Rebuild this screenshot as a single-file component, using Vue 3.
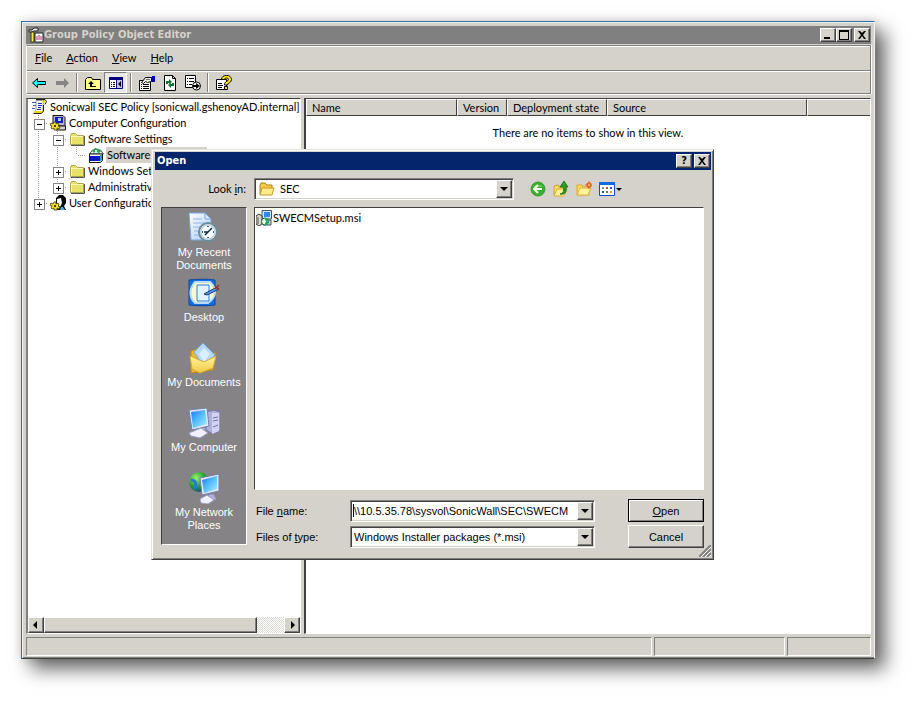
<script setup>
import { ref } from 'vue'

const menus = [['F', 'ile'], ['A', 'ction'], ['V', 'iew'], ['H', 'elp']]

const tools = [
  { icon: 'back', label: 'Back' },
  { icon: 'forward', label: 'Forward' },
  { sep: true },
  { icon: 'up-level', label: 'Up one level' },
  { icon: 'tree-toggle', label: 'Show or hide console tree', pressed: true },
  { sep: true },
  { icon: 'properties', label: 'Properties' },
  { icon: 'refresh', label: 'Refresh' },
  { icon: 'export', label: 'Export list' },
  { sep: true },
  { icon: 'help', label: 'Help' },
]

const tree = [
  { icon: 'scroll', text: 'Sonicwall SEC Policy [sonicwall.gshenoyAD.internal]', guides: [] },
  { icon: 'computer-gear', text: 'Computer Configuration', guides: ['minus tee'] },
  { icon: 'folder', text: 'Software Settings', guides: ['line', 'minus tee'] },
  { icon: 'package', text: 'Software installation', guides: ['line', 'line', 'elbow'], selected: true },
  { icon: 'folder', text: 'Windows Settings', guides: ['line', 'plus tee'] },
  { icon: 'folder', text: 'Administrative Templates', guides: ['line', 'plus elbow'] },
  { icon: 'user-gear', text: 'User Configuration', guides: ['plus elbow'] },
]

const places = [
  { icon: 'recent', text: 'My Recent Documents' },
  { icon: 'desktop', text: 'Desktop' },
  { icon: 'documents', text: 'My Documents' },
  { icon: 'computer', text: 'My Computer' },
  { icon: 'network', text: 'My Network Places' },
]

const fileName = ref('\\\\10.5.35.78\\sysvol\\SonicWall\\SEC\\SWECM')
</script>

<template>
  <svg class="defs" aria-hidden="true">
    <symbol id="i-app" viewBox="0 0 16 16">
      <path d="M1 3h3l2-2h4v3H6L4 5H1z" fill="#e8e8e8" stroke="#222" />
      <path d="M3 5h3v10H3z" fill="#f5e84a" stroke="#333" />
      <path d="M7 6h8v9H7z" fill="#fff" stroke="#222" />
      <path d="M9 9v4M11 8v5M13 9v4" stroke="#b03060" />
    </symbol>
    <symbol id="i-back" viewBox="0 0 16 16">
      <path d="M1.500 8l5-4.500v3h8v3h-8v3z" fill="#0ff" stroke="#000" />
    </symbol>
    <symbol id="i-forward" viewBox="0 0 16 16">
      <path d="M15 8l-5-5v3H2v4h8v3z" fill="#858585" />
    </symbol>
    <symbol id="i-up-level" viewBox="0 0 16 16">
      <path d="M.5 14.500V4.500l2-2h4l1 2h8v10z" fill="#ffff8c" stroke="#000" />
      <path d="M6 6l-3 3h2v3h6v-1H7V9h2z" fill="#000" />
    </symbol>
    <symbol id="i-tree-toggle" viewBox="0 0 16 16">
      <path d="M1.500 2.500h13v11h-13z" fill="#fff" stroke="#000080" />
      <path d="M1 2h14v3H1z" fill="#000080" />
      <path d="M9 5h5v8H9z" fill="#c8c8d0" />
      <path d="M8.500 5v9" stroke="#000080" />
      <path d="M3 7h1v1H3zM5 7h2v1H5zM3 9h1v1H3zM5 9h2v1H5zM3 11h1v1H3zM5 11h2v1H5zM13 6v6l-3-3z" fill="#000" />
    </symbol>
    <symbol id="i-properties" viewBox="0 0 16 16">
      <path d="M.5 5.500h11v10H.5z" fill="#fff" stroke="#000" />
      <path d="M2 9h1v1H2zM4 9h6v1H4zM2 11h1v1H2zM4 11h6v1H4zM2 13h1v1H2zM4 13h6v1H4z" fill="#000" />
      <path d="M2.500 7.500l4-5h6v4l-4 1-2-1-2 2z" fill="#f2f2e8" stroke="#000" />
      <path d="M13 1h3v6h-3z" fill="#0000b0" />
      <path d="M7 4.500h4" stroke="#777" />
    </symbol>
    <symbol id="i-refresh" viewBox="0 0 16 16">
      <path d="M2.500.5h8l3 3v12h-11z" fill="#fff" stroke="#000" />
      <path d="M10.500 .5v3h3" fill="none" stroke="#000" />
      <path d="M4 9V6h3V4l3 3-3 2V8H6v1zM12 8v3H9v2l-3-3 3-2v1h1V8z" fill="#087830" />
    </symbol>
    <symbol id="i-export" viewBox="0 0 16 16">
      <path d="M.5.5h10v12H.5z" fill="#fff" stroke="#000" />
      <path d="M2 3h1v1H2zM4 3h5v1H4zM2 6h1v1H2zM4 6h5v1H4zM2 9h1v1H2zM4 9h3v1H4z" fill="#000" />
      <circle cx="11.500" cy="11" r="4" fill="#fff" stroke="#000" />
      <path d="M8 10h3V8l4 3-4 3v-2H8z" fill="#000" />
    </symbol>
    <symbol id="i-help" viewBox="0 0 16 16">
      <path d="M.5 4.500h10v10H.5z" fill="#fff" stroke="#000" />
      <path d="M2 8h4v1H2zM2 10h5v1H2zM2 12h4v1H2z" fill="#000" />
      <path d="M5.500 4.500c0-5.500 10-5.500 10 0 0 3.500-4 3-4 5.500h-3c0-4 4-3.500 4-5.500 0-2-4-2-4 0z" fill="#ffea18" stroke="#000" />
      <path d="M8.500 11.500h3v3h-3z" fill="#ffea18" stroke="#000" />
    </symbol>
    <symbol id="i-scroll" viewBox="0 0 16 16">
      <path d="M5 1.500h9l-2 4v6l-2 2H3l2-3V4z" fill="#fff" stroke="#999" />
      <path d="M7 4.500h4M7 6.500h4M7 8.500h3M6 10.500h4" stroke="#1832d0" />
      <path d="M11 2.500h3M3 13h8l1-2" fill="none" stroke="#f0d820" stroke-width="2" />
      <path d="M5 .5h9l1.500 2-1.500 3M12.500 6v6l-2 2.500h-8" fill="none" stroke="#222" />
      <path d="M1 3.500h4M2 6.500h3M1 9.500h3" stroke="#4060c0" />
    </symbol>
    <symbol id="i-computer-gear" viewBox="0 0 16 16">
      <path d="M3 .5h10l2 2V11H3z" fill="#b8b8c8" stroke="#111" />
      <path d="M5 2h8v6H5z" fill="#1020b8" />
      <path d="M8 3h3v3H8z" fill="#a8d0ff" />
      <path d="M6 11h9.500v4H6z" fill="#d0d0d0" stroke="#111" />
      <path d="M4 7h2v2l2-1 1 2-1 1 2 1-1 2-2-1v2H4v-2l-2 1-1-1 1-2-2-1 1-2 2 1z" fill="#f4e030" stroke="#443c00" stroke-width=".8" />
      <path d="M4 10h2v2H4z" fill="#443c00" />
    </symbol>
    <symbol id="i-user-gear" viewBox="0 0 16 16">
      <path d="M6 3l3-3h4l3 3v5l-2 3 2 4H7l1-4-2-3z" fill="#080808" />
      <path d="M7 4l4-1 1 5-2 4-3-3z" fill="#fff" />
      <path d="M11 12h2l2 3h-5z" fill="#40a8f0" />
      <path d="M4 7h2v2l2-1 1 2-1 1 2 1-1 2-2-1v2H4v-2l-2 1-1-1 1-2-2-1 1-2 2 1z" fill="#f4e030" stroke="#443c00" stroke-width=".8" />
      <path d="M4 10h2v2H4z" fill="#443c00" />
    </symbol>
    <symbol id="i-folder" viewBox="0 0 16 16">
      <path d="M1.500 13.500v-9l1-2h4l2 2h6v9z" fill="#e8e268" stroke="#a8a458" />
      <path d="M2 5.500h12M2.500 5v8" stroke="#fbf8b4" />
      <path d="M2 14.500h13.500V5" fill="none" stroke="#555" />
    </symbol>
    <symbol id="i-package" viewBox="0 0 16 16">
      <path d="M1.500 7l3-4h8l3 4z" fill="#e8f4e8" stroke="#555" />
      <path d="M1.500 7v8.500h11l2-2V7z" fill="#fff" stroke="#111" />
      <path d="M2 9h10v5H2z" fill="#0818c8" />
      <path d="M12 8h2v5l-2 2z" fill="#30a0d0" />
      <path d="M4 4l3-3 4 1 2 3-3 1-2-2-2 2z" fill="#30a058" />
      <path d="M7 3h2v2H7z" fill="#d8f0e0" />
    </symbol>
    <symbol id="i-folder-open" viewBox="0 0 16 16">
      <path d="M1 13V4l1-2h4l2 2h5v3" fill="#f3c94a" stroke="#b08010" />
      <path d="M1 14l2-7h12l-2 7z" fill="#ffec88" stroke="#c89a28" />
    </symbol>
    <symbol id="i-msi" viewBox="0 0 16 16">
      <path d="M6 .5h9.500V9H6z" fill="#d8e4f8" stroke="#456" />
      <path d="M8 2h6v5H8z" fill="#3088f0" />
      <path d="M0 6l3-2 3 2v8l-3 2-3-2z" fill="#d8d8c8" stroke="#333" />
      <path d="M2 7v7" stroke="#555" />
      <path d="M7 10h8v5H7z" fill="#c8ccd8" stroke="#456" />
      <circle cx="9" cy="11.500" r="3.500" fill="#e8fff0" stroke="#186048" />
      <path d="M9 8a3.500 3.500 0 0 1 0 7z" fill="#28b060" />
      <circle cx="9" cy="11.500" r="1" fill="#fff" />
    </symbol>
    <symbol id="i-nav-back" viewBox="0 0 16 16">
      <circle cx="8" cy="8" r="7" fill="#35b226" stroke="#3c9c34" />
      <path d="M3 6a6 5 0 0 1 10 0z" fill="#7ddc62" opacity=".7" />
      <path d="M12 8H5M8 4L4 8l4 4" fill="none" stroke="#fff" stroke-width="2" />
    </symbol>
    <symbol id="i-nav-up" viewBox="0 0 16 16">
      <path d="M1 14V5l4-1 1 2h7l-2 8z" fill="#ffe060" stroke="#d0a028" />
      <path d="M1 15l3-7h10l-3 7z" fill="#fff09a" stroke="#d8ac38" />
      <path d="M7 13c4-1 4-4 3-7H7l4-6 4 6h-2c1 5-1 8-6 7z" fill="#28a020" stroke="#106010" stroke-width=".7" />
    </symbol>
    <symbol id="i-nav-new" viewBox="0 0 16 16">
      <path d="M1 14V4h5l1 2h6v8z" fill="#ffdc58" stroke="#d8a830" />
      <path d="M1 14l3-7h11l-3 7z" fill="#fff09a" stroke="#dcb448" />
      <circle cx="13" cy="4" r="2" fill="#ffb050" stroke="#f06020" stroke-width="1.500" />
      <path d="M13 0v2M13 6v2M9 4h2M15 4h1" stroke="#f06020" />
    </symbol>
    <symbol id="i-nav-view" viewBox="0 0 16 16">
      <path d="M.5 2v12.500h15V2z" fill="#fff" stroke="#0a50c0" />
      <path d="M0 1h16v3H0z" fill="#1468e0" />
      <path d="M3 6h2v2H3z" fill="#888" /><path d="M7 6h2v2H7z" fill="#e04020" /><path d="M11 6h2v2h-2z" fill="#2050d0" />
      <path d="M3 10h2v2H3z" fill="#2050d0" /><path d="M7 10h2v2H7z" fill="#30a030" /><path d="M11 10h2v2h-2z" fill="#e0a020" />
    </symbol>

    <linearGradient id="g-screen" x1="0" y1="0" x2="1" y2="1">
      <stop offset="0" stop-color="#1d7af0" /><stop offset=".5" stop-color="#58c0ff" /><stop offset="1" stop-color="#b0ecff" />
    </linearGradient>
    <linearGradient id="g-paper" x1="0" y1="0" x2="1" y2="1">
      <stop offset="0" stop-color="#fff" /><stop offset="1" stop-color="#a8c8f4" />
    </linearGradient>
    <linearGradient id="g-folder" x1="0" y1="0" x2="0" y2="1">
      <stop offset="0" stop-color="#fff4a0" /><stop offset="1" stop-color="#f4c840" />
    </linearGradient>
    <radialGradient id="g-globe" cx=".35" cy=".3" r=".8">
      <stop offset="0" stop-color="#a0f070" /><stop offset=".5" stop-color="#28a830" /><stop offset="1" stop-color="#0a3c90" />
    </radialGradient>
    <symbol id="i-recent" viewBox="0 0 32 32">
      <path d="M1 1h16l6 6v21H3z" fill="url(#g-paper)" stroke="#7aa4e0" />
      <path d="M17 1v6h6z" fill="#dcecff" stroke="#7aa4e0" />
      <path d="M5 7h9M5 11h12M5 15h8M6 19h6M6 23h6" stroke="#90b4ec" />
      <circle cx="20" cy="20" r="9" fill="#d8e8f0" stroke="#6c8c9c" stroke-width="2" />
      <circle cx="20" cy="20" r="7" fill="#f8feff" stroke="#a8c8d8" />
      <path d="M20 14v1M20 25v1M14 20h1M25 20h1M17 23l3-3 4-4M20 20h-4" stroke="#063048" stroke-width="1.500" fill="none" />
    </symbol>
    <symbol id="i-desktop" viewBox="0 0 32 32">
      <path d="M1 3c8-1 18-1 26 0v25c-8 1-18 1-26 0z" fill="#1470e0" stroke="#0848a8" />
      <path d="M7 5h15c7 6 7 15-2 21H7C1 20 1 12 7 5z" fill="#fff8c8" stroke="#b8dcff" stroke-width="2" />
      <path d="M9 8h12v16H9z" fill="#e4f2ff" stroke="#2880e0" />
      <path d="M16 17l13-7 2 2-12 6z" fill="#58a0e8" stroke="#103870" />
      <path d="M27 9l4 4M31 8l-4 4" stroke="#a03818" stroke-width="1.500" />
    </symbol>
    <symbol id="i-documents" viewBox="0 0 32 32">
      <path d="M3 9l8-3 3 4 14 1-3 17-22 3z" fill="#e8b838" stroke="#b88818" />
      <path d="M6 10L15 1l12 12-11 12z" fill="#b4d8fc" stroke="#78a8d8" />
      <path d="M11 12l5-6 6 6-6 8z" fill="#d8f0ff" />
      <path d="M2 14l14 6 12-6-3 12-13 5-8-4z" fill="url(#g-folder)" stroke="#d8ac30" />
    </symbol>
    <symbol id="i-computer" viewBox="0 0 32 32">
      <path d="M18 5l8-2 6 2v19l-7 3-7-4z" fill="#b0b0d8" stroke="#7878a8" />
      <path d="M24 6l7 0v18l-7 3z" fill="#d4d4f0" />
      <path d="M25 11l5-1M25 14l5-1M25 20l5-2" stroke="#7070a8" />
      <path d="M1 3l18-2 2 18-17 4z" fill="#e4e8f8" stroke="#7080b0" />
      <path d="M3 5l14-2 2 14-14 4z" fill="url(#g-screen)" />
      <path d="M11 21h6l1 6h-8z" fill="#a8acd0" />
      <path d="M1 26l12-5 7 5-8 5-9-2z" fill="#f0f0ff" stroke="#9a9cc0" />
    </symbol>
    <symbol id="i-network" viewBox="0 0 32 32">
      <circle cx="11" cy="10" r="10" fill="url(#g-globe)" />
      <path d="M3 8c5 0 6 5 3 9" stroke="#2878d8" stroke-width="3" fill="none" />
      <path d="M12 6l19-4v17l-17 4z" fill="#e4e8f8" stroke="#7080b0" />
      <path d="M14 8l15-4v13l-13 4z" fill="url(#g-screen)" />
      <path d="M21 22h5l3 6h-9z" fill="#b0b0d8" stroke="#8080a8" />
      <path d="M12 27l7-4 7 5-6 4-7-1z" fill="#f0f0ff" stroke="#a0a0c4" />
    </symbol>
  </svg>

  <div class="desktop">
    <main class="window">
      <header class="title-bar">
        <svg class="icon16"><use href="#i-app" /></svg>
        <h1>Group Policy Object Editor</h1>
        <div class="caption-buttons">
          <button type="button" aria-label="Minimize"><svg viewBox="0 0 12 10"><path d="M2 7h6v2H2z" /></svg></button>
          <button type="button" aria-label="Maximize"><svg viewBox="0 0 12 10"><path d="M1 0h10v10H1zM2 2v7h8V2z" fill-rule="evenodd" /></svg></button>
          <button type="button" aria-label="Close" class="close"><svg viewBox="0 0 12 10"><path d="M2 1h2l2 2 2-2h2L7 5l3 4H8L6 6 4 9H2l3-4z" /></svg></button>
        </div>
      </header>

      <div class="bars">
        <nav class="menu">
          <button v-for="m in menus" :key="m[0]" type="button"><u>{{ m[0] }}</u>{{ m[1] }}</button>
        </nav>
        <div class="toolbar">
          <template v-for="(t, i) in tools" :key="i">
            <span v-if="t.sep" class="sep"></span>
            <button v-else type="button" :aria-label="t.label" :class="{ pressed: t.pressed }">
              <svg class="icon16"><use :href="'#i-' + t.icon" /></svg>
            </button>
          </template>
        </div>
      </div>

      <div class="panes">
        <section class="tree-pane">
          <ul class="tree">
            <li v-for="node in tree" :key="node.text">
              <span v-for="(g, i) in node.guides" :key="i" class="guide" :class="g"></span>
              <svg class="icon16 node-icon"><use :href="'#i-' + node.icon" /></svg>
              <span class="node-text" :class="{ selected: node.selected }">{{ node.text }}</span>
            </li>
          </ul>
          <div class="scrollbar">
            <button type="button" aria-label="Scroll left"><svg viewBox="0 0 8 8"><path d="M5 0v8L1 4z" /></svg></button>
            <span class="thumb"></span>
            <span class="track"></span>
            <button type="button" aria-label="Scroll right"><svg viewBox="0 0 8 8"><path d="M3 0v8l4-4z" /></svg></button>
          </div>
        </section>

        <section class="list-pane">
          <table>
            <colgroup><col class="c-name"><col class="c-version"><col class="c-state"><col class="c-source"><col></colgroup>
            <thead>
              <tr><th>Name</th><th>Version</th><th>Deployment state</th><th>Source</th><th></th></tr>
            </thead>
            <tbody>
              <tr><td colspan="5">There are no items to show in this view.</td></tr>
            </tbody>
          </table>
        </section>
      </div>

      <footer class="status"><span></span><span></span><span></span></footer>
    </main>

    <section class="dialog" role="dialog" aria-labelledby="dialog-title">
      <header class="title-bar active">
        <h2 id="dialog-title">Open</h2>
        <div class="caption-buttons">
          <button type="button" aria-label="Help" class="what">?</button>
          <button type="button" aria-label="Close" class="close"><svg viewBox="0 0 12 10"><path d="M2 1h2l2 2 2-2h2L7 5l3 4H8L6 6 4 9H2l3-4z" /></svg></button>
        </div>
      </header>

      <div class="look-row">
        <label for="look-in">Look <u>i</u>n:</label>
        <div class="combo with-icon">
          <svg class="icon16 combo-icon"><use href="#i-folder-open" /></svg>
          <select id="look-in"><option>SEC</option></select>
          <span class="drop"><svg viewBox="0 0 8 4"><path d="M0 0h8L4 4z" /></svg></span>
        </div>
        <div class="nav-tools">
          <button type="button" aria-label="Go back"><svg class="icon16"><use href="#i-nav-back" /></svg></button>
          <button type="button" aria-label="Up one level"><svg class="icon16"><use href="#i-nav-up" /></svg></button>
          <button type="button" aria-label="Create new folder"><svg class="icon16"><use href="#i-nav-new" /></svg></button>
          <button type="button" aria-label="View menu">
            <svg class="icon16"><use href="#i-nav-view" /></svg>
            <svg class="tiny" viewBox="0 0 6 3"><path d="M0 0h6L3 3z" /></svg>
          </button>
        </div>
      </div>

      <div class="dialog-body">
        <nav class="places">
          <button v-for="p in places" :key="p.text" type="button">
            <svg class="icon32"><use :href="'#i-' + p.icon" /></svg>
            <span>{{ p.text }}</span>
          </button>
        </nav>
        <div class="right">
          <ul class="files">
            <li><svg class="icon16"><use href="#i-msi" /></svg><span>SWECMSetup.msi</span></li>
          </ul>
          <form class="fields" @submit.prevent>
            <label for="file-name">File <u>n</u>ame:</label>
            <div class="combo">
              <input id="file-name" v-model="fileName" type="text">
              <button type="button" class="drop" aria-label="Show recent names"><svg viewBox="0 0 8 4"><path d="M0 0h8L4 4z" /></svg></button>
            </div>
            <button type="submit" class="push default"><u>O</u>pen</button>
            <label for="file-type">Files of <u>t</u>ype:</label>
            <div class="combo">
              <select id="file-type"><option>Windows Installer packages (*.msi)</option></select>
              <span class="drop"><svg viewBox="0 0 8 4"><path d="M0 0h8L4 4z" /></svg></span>
            </div>
            <button type="button" class="push">Cancel</button>
          </form>
        </div>
      </div>
      <svg class="grip" viewBox="0 0 12 12"><path d="M0 12L12 0M4 12l8-8M8 12l4-4" stroke="#808080" stroke-width="2" /><path d="M2 12L12 2M6 12l6-6M10 12l2-2" stroke="#fff" /></svg>
    </section>
  </div>
</template>

<style>
body {
  margin: 0;
  background: #fff;
}
</style>

<style scoped>
* {
  box-sizing: border-box;
}
.defs {
  position: absolute;
  width: 0;
  height: 0;
}
.desktop {
  --face: #d5d2cb;
  --shade: #808080;
  --dark: #404040;
  position: relative;
  display: flex;
  min-height: 100vh;
  padding: 21px 42px 42px 21px;
  font: 11px/16px Lato, sans-serif;
  color: #000;
}
button,
input,
select {
  font: inherit;
  color: inherit;
  margin: 0;
  padding: 0;
  border: 0;
  border-radius: 0;
  background: none;
}
u {
  text-underline-offset: 1px;
}
ul {
  margin: 0;
  padding: 0;
  list-style: none;
}
.icon16 {
  flex: none;
  width: 16px;
  height: 16px;
}
.icon32 {
  width: 32px;
  height: 32px;
}

/* window frame */
.window {
  flex: 1;
  min-width: 0;
  display: flex;
  flex-direction: column;
  padding: 4px 3px 2px 4px;
  border: 1px solid;
  border-color: #39709f #f4f4f4 var(--dark) #39709f;
  background: var(--face);
  box-shadow: inset 1px 1px #e9f3fa, inset 0 -1px var(--shade), 10px 10px 18px rgba(0, 0, 0, .6), 0 0 10px rgba(0, 0, 0, .14);
}
.title-bar {
  display: flex;
  align-items: center;
  height: 18px;
  padding: 0 1px 0 2px;
  background: var(--shade);
  color: #d5d2cb;
}
.title-bar h1,
.title-bar h2 {
  flex: 1;
  margin: 0;
  font: bold 11px/16px "DejaVu Sans Condensed", "DejaVu Sans", sans-serif;
}
.caption-buttons {
  display: flex;
}
.caption-buttons button {
  display: flex;
  align-items: center;
  justify-content: center;
  width: 16px;
  height: 14px;
  background: var(--face);
  border: 1px solid;
  border-color: #fff var(--dark) var(--dark) #fff;
  box-shadow: inset -1px -1px var(--shade);
  color: #000;
}
.caption-buttons .close {
  margin-left: 2px;
}
.caption-buttons svg {
  width: 12px;
  height: 10px;
}
.caption-buttons .what {
  font: bold 11px/12px "DejaVu Sans Condensed", "DejaVu Sans", sans-serif;
}
.bars {
  margin-top: 1px;
  border: 1px solid var(--shade);
  border-left-color: #fff;
  box-shadow: inset 0 1px #fff, 0 1px #fff, 1px 0 #fff;
}
.menu {
  display: flex;
  gap: 14px;
  height: 25px;
  padding: 0 8px 1px;
  border-bottom: 1px solid var(--shade);
}
.toolbar {
  display: flex;
  align-items: center;
  height: 22px;
  border-top: 1px solid #fff;
}
.toolbar button {
  display: flex;
  align-items: center;
  justify-content: center;
  width: 23px;
  height: 21px;
}
.toolbar .pressed {
  border: 1px solid;
  border-color: var(--shade) #fff #fff var(--shade);
  background: #ebe9e5;
}
.sep {
  width: 2px;
  height: 19px;
  margin: 0 3px;
  border-left: 1px solid var(--shade);
  border-right: 1px solid #fff;
}

/* panes */
.panes {
  flex: 1;
  display: flex;
  gap: 3px;
  min-height: 0;
  margin-top: 4px;
}
.tree-pane,
.list-pane {
  border: 1px solid;
  border-color: var(--dark) #fff #fff var(--dark);
  background: #fff;
}
.tree-pane {
  flex: none;
  display: flex;
  flex-direction: column;
  width: 275px;
  border-left: 2px solid var(--shade);
}
.tree {
  flex: 1;
  padding-left: 1px;
}
.tree li {
  display: flex;
  height: 16px;
  line-height: 15px;
  white-space: nowrap;
}
.guide {
  position: relative;
  flex: none;
  width: 19px;
  background: repeating-linear-gradient(#999 0 1px, transparent 1px 2px) 9px 0 / 1px 100% no-repeat;
}
.guide.elbow {
  background-size: 1px 8px;
}
.guide.tee::after,
.guide.elbow::after {
  content: "";
  position: absolute;
  top: 8px;
  left: 10px;
  right: 0;
  height: 1px;
  background: repeating-linear-gradient(90deg, transparent 0 1px, #999 1px 2px);
}
.guide.plus::before,
.guide.minus::before {
  content: "";
  position: absolute;
  z-index: 1;
  top: 4px;
  left: 5px;
  width: 9px;
  height: 9px;
  border: 1px solid #848484;
  background: linear-gradient(#000, #000) center / 5px 1px no-repeat, #fff;
}
.guide.plus::before {
  background: linear-gradient(#000, #000) center / 5px 1px no-repeat, linear-gradient(#000, #000) center / 1px 5px no-repeat, #fff;
}
.node-icon {
  margin: 0 2px;
}
.node-text {
  padding: 0 1px;
}
.node-text.selected {
  background: var(--face);
}
.scrollbar {
  display: flex;
  height: 16px;
  background: #eeece8;
}
.scrollbar button,
.thumb {
  border: 1px solid;
  border-color: #fff var(--dark) var(--dark) #fff;
  box-shadow: inset -1px -1px var(--shade);
  background: var(--face);
}
.scrollbar button {
  display: flex;
  align-items: center;
  justify-content: center;
  width: 16px;
}
.scrollbar svg {
  width: 8px;
  height: 8px;
}
.thumb {
  flex: 1;
}
.track {
  width: 27px;
  background: repeating-conic-gradient(#fff 0 25%, #dcdad5 0 50%) 0 0 / 2px 2px;
}
.list-pane {
  flex: 1;
  min-width: 0;
  border-left: 2px solid var(--dark);
}
table {
  width: 100%;
  table-layout: fixed;
  border-collapse: separate;
  border-spacing: 0;
}
.c-name { width: 151px; }
.c-version { width: 50px; }
.c-state { width: 100px; }
.c-source { width: 200px; }
th {
  height: 17px;
  padding: 0 5px;
  border: 1px solid;
  border-color: #fff var(--dark) var(--dark) #fff;
  background: var(--face);
  font-weight: 400;
  line-height: 14px;
  text-align: left;
  white-space: nowrap;
}
th:last-child {
  border-right: 0;
}
td {
  padding: 9px 0;
  text-align: center;
}
.status {
  display: grid;
  grid-template-columns: 1fr 131px 84px;
  gap: 2px;
  margin-top: 3px;
}
.status span {
  height: 19px;
  border: 1px solid;
  border-color: var(--shade) #fff #fff var(--shade);
}

/* open dialog */
.dialog {
  position: absolute;
  left: 151px;
  top: 149px;
  width: 563px;
  padding: 2px 2px 11px 3px;
  border: 1px solid;
  border-color: #e4e2dd var(--dark) var(--dark) #e4e2dd;
  background: var(--face);
  box-shadow: inset 1px 1px #fff, inset -1px -1px var(--shade);
}
.title-bar.active {
  background: #04246c;
  color: #fff;
}
.look-row {
  display: flex;
  align-items: center;
  gap: 8px;
  margin: 8px 0 7px;
}
.look-row label {
  width: 91px;
  text-align: right;
}
.combo {
  position: relative;
  display: flex;
  height: 22px;
  padding: 1px;
  border: 1px solid;
  border-color: var(--shade) #fff #fff var(--shade);
  box-shadow: inset 1px 1px var(--dark), inset -1px -1px var(--face);
  background: #fff;
}
.look-row .combo {
  width: 260px;
}
.combo select,
.combo input {
  appearance: none;
  flex: 1;
  min-width: 0;
  padding: 0 0 0 2px;
  outline: 0;
}
.combo input {
  background: linear-gradient(#000, #000) 1px center / 1px 13px no-repeat;
}
.combo.with-icon select {
  padding-left: 24px;
}
.combo-icon {
  position: absolute;
  left: 4px;
  top: 2px;
}
.drop {
  display: flex;
  align-items: center;
  justify-content: center;
  width: 16px;
  border: 1px solid;
  border-color: #fff var(--dark) var(--dark) #fff;
  box-shadow: inset -1px -1px var(--shade);
  background: var(--face);
  pointer-events: none;
}
.drop svg {
  width: 8px;
  height: 4px;
}
.nav-tools {
  display: flex;
  gap: 7px;
  margin-left: 8px;
}
.nav-tools button {
  display: flex;
  align-items: center;
  gap: 1px;
}
.tiny {
  width: 6px;
  height: 3px;
}
.dialog-body {
  display: flex;
  gap: 7px;
  padding: 0 7px 0 6px;
}
.places {
  display: flex;
  flex-direction: column;
  width: 86px;
  height: 338px;
  padding: 4px 0;
  border: 1px solid;
  border-color: var(--dark) #fff #fff var(--dark);
  background: #858385;
}
.places button {
  display: flex;
  flex-direction: column;
  align-items: center;
  gap: 2px;
  height: 65px;
  color: #fff;
  line-height: 13px;
}
.places,
.fields {
  font: 11px/16px "Liberation Sans", sans-serif;
}
.right {
  flex: 1;
  min-width: 0;
  display: flex;
  flex-direction: column;
}
.files {
  height: 283px;
  padding: 2px 1px;
  border: 1px solid;
  border-color: var(--dark) #fff #fff var(--dark);
  background: #fff;
}
.files li {
  display: flex;
  align-items: center;
  gap: 1px;
}
.fields {
  display: grid;
  grid-template-columns: 94px 245px 1fr;
  align-items: center;
  row-gap: 3px;
  margin-top: 9px;
  padding-left: 2px;
}
.push {
  justify-self: end;
  width: 76px;
  height: 23px;
  border: 1px solid;
  border-color: #fff var(--dark) var(--dark) #fff;
  box-shadow: inset -1px -1px var(--shade);
}
.push.default {
  border-color: #000;
  box-shadow: inset 1px 1px #fff, inset -1px -1px var(--shade);
}
.grip {
  position: absolute;
  right: 2px;
  bottom: 2px;
  width: 12px;
  height: 12px;
}
</style>
